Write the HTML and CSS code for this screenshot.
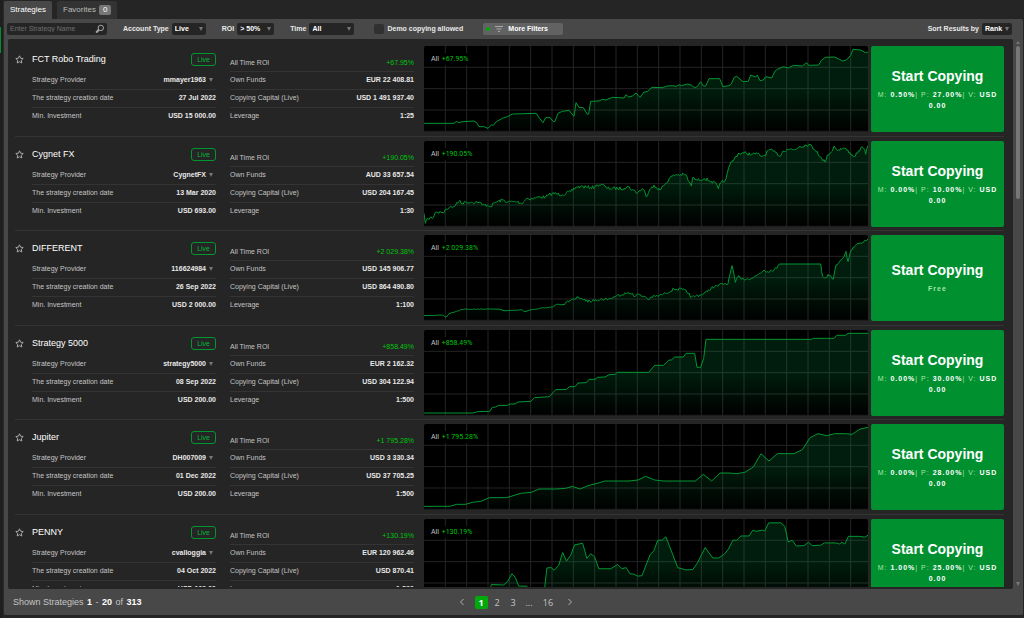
FILE: index.html
```html
<!DOCTYPE html>
<html lang="en">
<head>
<meta charset="utf-8">
<title>Strategies</title>
<link rel="stylesheet" href="styles.css">
</head>
<body>
<aside class="rail"><span class="rail-active"></span></aside>
<main class="app">
  <nav class="tabs">
    <button class="tab tab-active" type="button">Strategies</button>
    <button class="tab" type="button">Favorites <span class="count">0</span></button>
  </nav>
  <section class="panel">
    <form class="toolbar">
      <div class="search">
        <input class="search-input" type="text" placeholder="Enter Strategy Name" aria-label="Enter Strategy Name">
        <button class="search-button" type="button" aria-label="Search">
          <svg viewBox="0 0 10 10" width="10" height="10"><circle cx="5.8" cy="3.9" r="2.7"/><path d="M3.8 5.8 1.2 8.6" class="thick"/></svg>
        </button>
      </div>
      <div class="field field-type"><label for="type">Account Type</label><span class="select"><select id="type"><option>Live</option></select></span></div>
      <div class="field field-roi"><label for="roi">ROI</label><span class="select"><select id="roi"><option>&gt; 50%</option></select></span></div>
      <div class="field field-time"><label for="time">Time</label><span class="select"><select id="time"><option>All</option></select></span></div>
      <label class="check"><input type="checkbox">Demo copying allowed</label>
      <button class="more" type="button"><span class="dot"></span><svg viewBox="0 0 8 8" width="8" height="8"><path d="M0 1.5H8M1.5 4H6.500M3 6.500H5"/></svg>More Filters</button>
      <div class="field field-sort"><label for="sort">Sort Results by</label><span class="select"><select id="sort"><option>Rank</option></select></span></div>
    </form>
    <div class="body">
      <div class="list"><div class="rows" id="rows"></div></div>
      <div class="scroll"><span class="up"></span><span class="thumb"></span><span class="down"></span></div>
    </div>
    <footer class="footer">
      <p class="shown">Shown Strategies <b>1</b> - <b>20</b> of <b>313</b></p>
      <nav class="pager" aria-label="Pages">
        <a href="#prev" aria-label="Previous"><svg viewBox="0 0 6 8" width="6" height="8"><path d="M4.500 1 1.500 4 4.500 7"/></svg></a>
        <a href="#1" class="current">1</a><a href="#2">2</a><a href="#3">3</a><span>...</span><a href="#16" class="wide">16</a>
        <a href="#next" class="next" aria-label="Next"><svg viewBox="0 0 6 8" width="6" height="8"><path d="M1.500 1 4.500 4 1.500 7"/></svg></a>
      </nav>
    </footer>
  </section>
</main>
<script src="app.js"></script>
</body>
</html>
```
FILE: styles.css
```css
* { box-sizing: border-box; }
body {
  margin: 0;
  height: 100vh;
  display: flex;
  overflow: hidden;
  background: #252525;
  color: #c4c4c4;
  font: 7px/10px "Liberation Sans", Arial, sans-serif;
}
button, input, select { font: inherit; color: inherit; border: 0; margin: 0; padding: 0; background: none; }
a { color: inherit; text-decoration: none; }
svg { display: block; }

.rail { width: 4px; flex: none; padding-top: 27px; background: #1f1f1f; border-right: 1px solid #2b2b2b; }
.rail-active { display: block; width: 1px; height: 26px; background: #008f31; }
.app { flex: 1; min-width: 0; display: flex; flex-direction: column; padding: 1px 1px 3px 0; }

.tabs { display: flex; gap: 5px; height: 18px; flex: none; }
.tab {
  display: flex; align-items: center; gap: 3px;
  padding: 0 6px; border-radius: 2px 2px 0 0;
  background: #333; color: #bbb; font-size: 8px;
}
.tab-active { background: #484848; color: #fff; }
.count { padding: 0 4px; border-radius: 2px; background: #777; color: #fff; }

.panel { flex: 1; min-height: 0; display: flex; flex-direction: column; background: #484848; border-radius: 0 2px 2px 2px; }
.toolbar { display: flex; align-items: center; height: 20px; flex: none; padding: 0 11px 0 3px; color: #e8e8e8; font-weight: 700; }
.search { display: flex; align-items: center; width: 100px; height: 12px; border-radius: 2px; background: #252525; padding: 0 2px 0 3px; }
.search-input { flex: 1; min-width: 0; outline: 0; font-weight: 400; }
.search-input::placeholder { color: #707070; opacity: 1; }
.search-button svg { fill: none; stroke: #aaa; stroke-width: 1; }
.search-button .thick { stroke-width: 2; }
.field { display: flex; align-items: center; gap: 3px; }
.select { position: relative; display: block; height: 12px; border-radius: 2px; background: #252525; }
.select select { appearance: none; width: 100%; height: 12px; padding-left: 3px; outline: 0; color: #fff; }
.select::after, .owner::after { content: ""; border: 2px solid transparent; border-top: 4px solid #777; border-bottom: 0; }
.select::after { position: absolute; right: 3px; top: 4px; pointer-events: none; }
.field-type { margin-left: 16px; }
.field-type .select { width: 34px; }
.field-roi { margin-left: 16px; }
.field-roi .select { width: 37px; }
.field-time { margin-left: 16px; }
.field-time .select { width: 45px; }
.field-sort { margin-left: auto; }
.field-sort .select { width: 30px; }
.check { display: flex; align-items: center; gap: 3px; margin-left: 20px; }
.check input { appearance: none; width: 10px; height: 10px; border-radius: 2px; background: #303030; }
.more { display: flex; align-items: center; width: 80px; height: 12px; margin-left: 20px; padding-left: 3px; border-radius: 2px; background: #626262; color: #fff; }
.more svg { margin: 0 5px; fill: none; stroke: #aaa; stroke-width: 1; }
.dot { width: 4px; height: 4px; border-radius: 2px; background: #00aa0c; }

.body { flex: 1; min-height: 0; display: flex; }
.list { flex: 1; min-width: 0; margin-left: 4px; padding: 3px 9px 2px 7px; background: #252525; border-radius: 2px; }
.rows { height: 100%; overflow: hidden; }
.row {
  display: grid;
  grid-template-columns: 17px 184px 198px minmax(0, 1fr) 133px;
  padding: 4px 0;
  border-bottom: 1px solid #343434;
}
.row:nth-child(even) { padding-bottom: 3px; }
.star { width: 9px; height: 9px; margin-top: 9px; align-self: start; }
.star svg { fill: none; stroke: #aaa; stroke-width: 1; }
.info { padding-top: 4px; }
.lines { margin: 0; }
.facts { padding: 8px 0 0 14px; }
.head { display: flex; align-items: center; justify-content: space-between; height: 18px; margin: 0 0 4px; }
.name { margin: 0; font-size: 9px; font-weight: 400; color: #fff; }
.badge { padding: 0 5px; border: 1px solid #009630; border-radius: 3px; color: #00b837; line-height: 11px; }
.line { display: flex; justify-content: space-between; height: 18px; line-height: 16px; border-bottom: 1px solid #343434; }
.line:last-child { border-bottom: 0; }
.facts .line:first-child { line-height: 18px; }
.line dd { margin: 0; color: #e8e8e8; font-weight: 700; }
.line dd.gain, .chart-label b { color: #00c40c; font-weight: 400; }
.owner { display: flex; align-items: center; gap: 3px; padding-right: 3px; line-height: 16px; }
.chart-cell { padding: 0 3px 0 10px; }
.chart { position: relative; height: 86px; background: #000; border-radius: 2px; overflow: hidden; }
.chart svg { position: absolute; inset: 0; width: 100%; height: 100%; }
.grid-lines { stroke: #242424; stroke-width: 1; }
.grid-lines path, .curve { vector-effect: non-scaling-stroke; }
.curve { fill: none; stroke: #009633; stroke-width: 1; }
.chart-label { position: absolute; left: 4px; top: 7px; margin: 0; padding: 0 3px; background: #000; font: 7px/12px Roboto, sans-serif; }
.chart-label b { margin-left: 1px; }
.copy { height: 86px; padding: 0 4px; border-radius: 2px; background: #009030; color: #fff; }
.copy strong { display: block; margin-bottom: 5px; font-size: 14px; line-height: 16px; }
.terms { display: block; color: #a5e6a5; line-height: 11px; letter-spacing: 1px; }
.terms b { color: #fff; }
.free { font-weight: 700; }

.scroll { display: flex; flex-direction: column; align-items: center; width: 10px; padding: 2px 0 3px; }
.up, .down { border: 2px solid transparent; }
.up { border-top: 0; border-bottom: 3px solid #777; margin-bottom: 2px; }
.down { border-bottom: 0; border-top: 4px solid #777; margin-top: auto; }
.thumb { width: 4px; height: 28%; border-radius: 2px; background: #777; }

.footer { display: grid; grid-template-columns: 1fr auto 1fr; align-items: center; height: 26px; flex: none; padding: 0 9px; font-size: 9px; color: #c4c4c4; }
.shown { margin: 0; }
.shown b { margin: 0 1px; color: #fff; }
.pager { display: flex; align-items: center; gap: 3px; padding-left: 5px; font: 9px/13px "Open Sans", sans-serif; }
.pager a, .pager span { display: flex; justify-content: center; min-width: 13px; }
.pager .wide { margin: 0 3px; }
.pager .next { margin-left: 3px; }
.pager .current { background: #00aa0c; border-radius: 2px; color: #fff; font-weight: 700; margin-left: 3px; }
.pager svg { align-self: center; fill: none; stroke: #b0b0b0; stroke-width: 1; }
```
FILE: app.js
```js
const strategies = [
  { name: "FCT Robo Trading", owner: "mmayer1963", date: "27 Jul 2022", min: "USD 15 000.00", roi: "+67.95%", funds: "EUR 22 408.81", capital: "USD 1 491 937.40", leverage: "1:25", terms: ["0.50%", "27.00%"],
    points: "0,232 90,232 97,226 105,230 115,227 150,225 158,230 165,242 180,242 192,247 203,236 208,238 217,227 235,217 250,212 265,204 337,202 345,215 357,230 365,215 378,215 388,227 393,226 402,202 415,196 435,193 450,211 456,170 465,184 478,185 490,205 494,204 500,166 525,165 535,160 545,162 565,154 600,156 606,146 614,153 625,150 636,141 648,154 660,138 670,137 684,124 715,125 730,120 745,119 757,121 765,116 772,119 791,114 803,118 812,125 820,122 830,107 838,120 845,120 855,98 887,98 897,122 915,119 922,114 930,95 938,91 957,107 973,106 980,87 995,93 1000,87 1008,104 1018,102 1025,92 1043,96 1053,75 1060,70 1078,62 1093,66 1108,58 1135,60 1148,50 1154,58 1184,57 1192,43 1204,34 1232,33 1246,40 1256,45 1267,42 1280,28 1287,10 1310,12 1324,20 1332,18" },
  { name: "Cygnet FX", owner: "CygnetFX", date: "13 Mar 2020", min: "USD 693.00", roi: "+190.05%", funds: "AUD 33 657.54", capital: "USD 204 167.45", leverage: "1:30", terms: ["0.00%", "10.00%"], jitter: 5,
    points: "0,217 4,247 12,232 28,230 34,214 42,216 48,211 60,215 64,205 75,200 88,197 95,192 108,178 114,188 125,183 142,184 165,183 175,192 190,192 200,197 212,185 235,177 250,183 280,182 292,188 308,172 325,173 345,168 365,168 385,157 415,161 440,152 455,139 470,136 490,139 512,139 520,132 533,130 550,142 600,142 610,136 625,146 640,155 655,143 662,150 667,168 680,143 690,132 708,147 725,127 738,110 755,101 785,101 795,122 802,135 806,110 820,118 840,112 862,121 878,130 883,143 892,123 902,122 910,95 918,70 930,55 942,38 960,36 985,40 1000,38 1010,46 1022,43 1035,26 1055,35 1070,45 1077,30 1090,24 1112,26 1125,17 1155,10 1180,31 1186,47 1203,63 1210,42 1225,30 1230,15 1238,26 1262,22 1278,35 1288,47 1300,37 1310,21 1322,25 1325,40 1332,14" },
  { name: "DIFFERENT", owner: "116624984", date: "26 Sep 2022", min: "USD 2 000.00", roi: "+2 029.38%", funds: "USD 145 906.77", capital: "USD 864 490.80", leverage: "1:100", jitter: 4,
    points: "0,242 55,240 66,247 75,236 100,228 115,223 225,222 240,227 295,225 303,230 325,223 385,216 398,208 420,209 430,198 455,192 463,186 473,190 485,198 505,198 515,194 560,191 575,183 605,175 625,175 633,185 640,177 655,184 663,184 673,194 682,186 705,182 725,175 750,162 775,163 795,174 800,188 815,183 830,180 850,170 862,158 880,153 895,146 912,146 918,118 924,92 930,118 934,142 945,122 952,133 985,129 1000,120 1020,105 1030,110 1058,100 1066,87 1190,87 1196,125 1205,128 1212,118 1228,132 1236,90 1250,75 1260,65 1266,49 1272,80 1280,47 1295,30 1315,22 1332,11" },
  { name: "Strategy 5000", owner: "strategy5000", date: "08 Sep 2022", min: "USD 200.00", roi: "+858.49%", funds: "EUR 2 162.32", capital: "USD 304 122.94", leverage: "1:500", terms: ["0.00%", "30.00%"],
    points: "0,249 148,249 160,245 197,244 205,232 215,231 223,226 250,226 258,222 273,222 282,216 320,214 332,203 376,200 395,179 428,178 436,170 453,170 462,159 487,158 495,148 513,148 520,142 543,141 555,134 574,133 579,127 674,127 692,106 718,106 735,90 742,90 752,81 778,81 786,70 812,70 819,112 830,112 839,85 846,28 1162,28 1168,25 1230,25 1238,16 1264,16 1272,10 1332,10" },
  { name: "Jupiter", owner: "DH007009", date: "01 Dec 2022", min: "USD 200.00", roi: "+1 795.28%", funds: "USD 3 330.34", capital: "USD 37 705.25", leverage: "1:500", terms: ["0.00%", "28.00%"],
    points: "0,247 77,247 98,241 125,241 145,235 170,232 196,221 248,221 290,208 322,205 345,195 395,195 425,193 445,187 468,195 492,185 520,178 542,171 615,171 642,168 665,157 692,168 718,171 814,171 838,151 863,171 888,147 915,147 938,149 962,145 988,129 1011,89 1035,111 1060,89 1110,89 1135,77 1158,41 1182,29 1208,35 1232,29 1265,29 1284,31 1308,15 1332,10" },
  { name: "PENNY", owner: "cvalloggia", date: "04 Oct 2022", min: "USD 100.00", roi: "+130.19%", funds: "EUR 120 962.46", capital: "USD 870.41", leverage: "1:500", terms: ["1.00%", "25.00%"], box: [10, 58, 1153, 223],
    points: "10,265 25,258 30,248 38,258 95,262 102,252 107,262 176,262 185,228 217,229 227,220 238,200 247,209 256,232 277,232 288,256 298,238 306,268 320,268 329,185 340,184 348,191 360,178 370,145 380,167 391,152 401,125 422,121 433,160 443,148 453,156 464,187 495,187 513,176 524,187 535,184 545,200 555,201 565,206 576,205 597,151 607,140 617,113 628,113 638,104 669,184 690,190 708,189 720,172 740,132 760,159 775,159 790,149 800,137 812,113 822,113 833,102 854,102 864,87 872,90 888,87 895,89 905,68 937,68 947,77 956,118 966,113 977,128 997,127 1008,118 1018,127 1040,126 1050,120 1080,120 1090,123 1095,118 1103,123 1112,103 1140,103 1155,105 1163,100" }
];

// Adds small intraday moves between the main points of a curve.
function roughen(points, amount) {
  if (!amount) return points;
  const out = [];
  let seed = 7;
  const noise = () => { seed = (seed * 16807) % 2147483647; return seed / 2147483647 - 0.5; };
  points.forEach(([x, y], i) => {
    out.push([x, y]);
    const next = points[i + 1];
    if (!next || (next[1] === y && next[0] - x > 100)) return;
    const steps = Math.floor((next[0] - x) / 3);
    const size = y > 200 && amount < 5 ? 1 : amount;
    for (let k = 1; k < steps; k++) {
      const t = k / steps;
      out.push([x + (next[0] - x) * t, y + (next[1] - y) * t + noise() * size * 2]);
    }
  });
  return out;
}

function chart(s, id) {
  const [left, top, width, height] = s.box || [0, 0, 1332, 258];
  const points = roughen(s.points.split(" ").map(p => p.split(",").map(Number)), s.jitter);
  const line = points.map(p => p.join(",")).join(" L");
  let grid = "";
  for (let x = 64; x < 1332; x += 64) grid += `M${x} 0V258`;
  for (let y = 64; y < 258; y += 64) grid += `M0 ${y}H1332`;
  return `<div class="chart">
    <svg class="grid-lines" viewBox="0 0 1332 258" preserveAspectRatio="none"><path d="${grid}"/></svg>
    <svg viewBox="${left} ${top} ${width} ${height}" preserveAspectRatio="none">
      <linearGradient id="fade${id}" gradientUnits="userSpaceOnUse" x1="0" y1="${top + height * 0.5}" x2="0" y2="${top + height}">
        <stop offset="0" stop-color="#00a048" stop-opacity=".18"/><stop offset="1" stop-color="#00a048" stop-opacity="0"/>
      </linearGradient>
      <path fill="url(#fade${id})" d="M${line} V${top + height} H${left}Z"/>
      <path class="curve" d="M${line}"/>
    </svg>
    <p class="chart-label">All <b>${s.roi}</b></p>
  </div>`;
}

const line = (label, value, cls = "") => `<div class="line"><dt>${label}</dt><dd class="${cls}">${value}</dd></div>`;

document.getElementById("rows").innerHTML = strategies.map((s, i) => `
  <article class="row">
    <button class="star" type="button" aria-label="Add to favorites"><svg viewBox="0 0 9 9" width="9" height="9"><path d="M4.500 .8 5.600 3.200 8.200 3.500 6.300 5.300 6.800 8 4.500 6.700 2.200 8 2.700 5.300 .8 3.500 3.400 3.200Z"/></svg></button>
    <div class="info">
      <div class="head"><h2 class="name">${s.name}</h2><span class="badge">Live</span></div>
      <dl class="lines">
        ${line("Strategy Provider", `<button class="owner" type="button">${s.owner}</button>`)}
        ${line("The strategy creation date", s.date)}
        ${line("Min. Investment", s.min)}
      </dl>
    </div>
    <dl class="lines facts">
      ${line("All Time ROI", s.roi, "gain")}
      ${line("Own Funds", s.funds)}
      ${line("Copying Capital (Live)", s.capital)}
      ${line("Leverage", s.leverage)}
    </dl>
    <div class="chart-cell">${chart(s, i)}</div>
    <button class="copy" type="button"><strong>Start Copying</strong><span class="terms${s.terms ? "" : " free"}">${s.terms ? `M: <b>${s.terms[0]}</b>| P: <b>${s.terms[1]}</b>| V: <b>USD 0.00</b>` : "Free"}</span></button>
  </article>`).join("");
```
